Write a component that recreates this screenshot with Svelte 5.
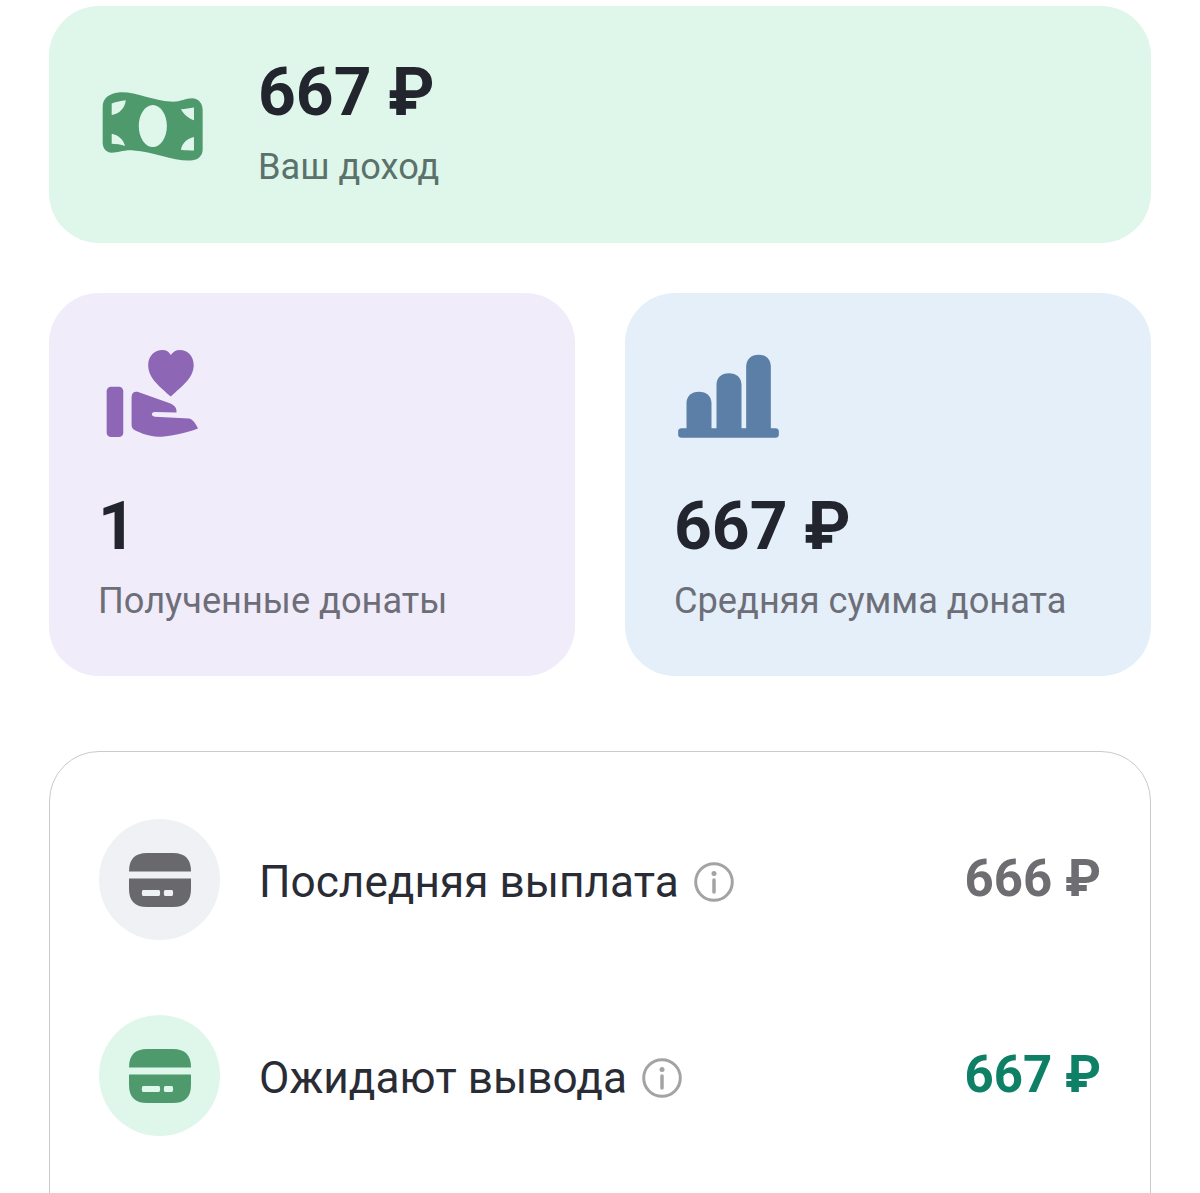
<script>
  const rows = [
    { label: 'Последняя выплата', value: '666 ₽', tone: 'grey' },
    { label: 'Ожидают вывода', value: '667 ₽', tone: 'green' }
  ];
</script>

<main class="page">
  <section class="income">
    <svg class="money" viewBox="36 28 302 214" aria-hidden="true">
      <path fill-rule="evenodd" d="M38 78C38 52 58 38 85 35C130 30 190 60 240 62C270 64 285 52 305 52C325 52 337 68 337 88V205C337 226 320 238 300 238C250 240 190 212 130 208C100 206 85 215 65 215C50 215 38 202 38 185ZM65 68C80 62 92 60 107 58C105 80 90 98 65 102ZM65 158C85 162 100 175 105 195C92 190 78 188 65 188ZM272 85C285 85 298 82 311 80V118C295 112 280 100 272 85ZM311 168V208C298 208 285 208 272 206C275 188 290 172 311 168ZM188 72C165 72 146 100 146 135C146 170 165 198 188 198C211 198 230 170 230 135C230 100 211 72 188 72Z"/>
    </svg>
    <div class="stat">
      <div class="amount">667 ₽</div>
      <div class="caption income-caption">Ваш доход</div>
    </div>
  </section>

  <div class="pair">
    <section class="tile donations">
      <svg class="tile-icon" viewBox="48 28 280 266" aria-hidden="true">
        <path d="M243 170C210 140 175 115 175 75C175 48 195 30 218 30C230 30 238 36 243 45C250 36 258 30 270 30C293 30 312 48 312 75C312 115 275 140 243 170Z"/>
        <rect x="50" y="141" width="50" height="151" rx="13"/>
        <path d="M125 172C125 158 135 153 147 157L240 190C255 196 262 205 260 218L195 217C183 217 183 230 195 231L298 236C310 238 320 255 325 266C290 280 230 291 205 291C180 291 150 280 135 272C128 268 125 262 125 255Z"/>
      </svg>
      <div class="amount">1</div>
      <div class="caption">Полученные донаты</div>
    </section>

    <section class="tile average">
      <svg class="tile-icon" viewBox="38 42 302 252" aria-hidden="true">
        <path d="M38 274C38 268 42 265 48 265H63V190C63 168 78 155 100 155C123 155 138 168 138 190V265H153V135C153 113 168 100 190 100C213 100 228 113 228 135V265H242V80C242 58 257 44 279 44C301 44 316 58 316 80V265H330C336 265 340 268 340 274V284C340 290 336 293 330 293H48C42 293 38 290 38 284Z"/>
      </svg>
      <div class="amount">667 ₽</div>
      <div class="caption">Средняя сумма доната</div>
    </section>
  </div>

  <section class="payouts">
    {#each rows as row}
      <div class="row {row.tone}">
        <div class="badge">
          <svg viewBox="0 0 62 54" aria-hidden="true">
            <path d="M0 18.500C0 6 6 0 18 0H44C56 0 62 6 62 18.500H0Z"/>
            <path fill-rule="evenodd" d="M0 25.500H62V36C62 48 56 54 44 54H18C6 54 0 48 0 36ZM14 37C12.500 37 12.500 43 14 43H30C31.500 43 31.500 37 30 37ZM36 37C34.500 37 34.500 43 36 43H43C44.500 43 44.500 37 43 37Z"/>
          </svg>
        </div>
        <div class="label">{row.label}</div>
        <svg class="info" viewBox="0 0 40 40" aria-hidden="true">
          <circle cx="20" cy="20" r="18.300" fill="none" stroke-width="3"/>
          <circle class="dot" cx="20" cy="11.500" r="2.500"/>
          <path d="M20 18V30" fill="none" stroke-width="3.500" stroke-linecap="round"/>
        </svg>
        <div class="value">{row.value}</div>
      </div>
    {/each}
  </section>
</main>

<style>
  :global(body) {
    margin: 0;
    background: #fff;
    overflow: hidden;
  }

  .page {
    box-sizing: border-box;
    height: 1193px;
    overflow: hidden;
    padding: 6px 49px 0;
    font-family: Roboto, "Liberation Sans", sans-serif;
    color: #22252e;
  }

  .income {
    box-sizing: border-box;
    height: 237px;
    display: flex;
    align-items: center;
    padding-left: 53px;
    gap: 55px;
    background: #dff7ea;
    border-radius: 50px;
  }

  .money {
    width: 101px;
    height: 72px;
    fill: #4f9a6c;
    margin-top: 2px;
  }

  .amount {
    font-size: 66px;
    line-height: 76px;
    font-weight: 700;
  }

  .stat {
    margin-top: -6px;
  }

  .caption {
    font-size: 36.200px;
    line-height: 44px;
    margin-top: 14px;
    color: #6d6e78;
  }

  .income-caption {
    color: #5b716b;
  }

  .pair {
    display: grid;
    grid-template-columns: 1fr 1fr;
    gap: 50px;
    margin-top: 50px;
  }

  .tile {
    box-sizing: border-box;
    height: 383px;
    padding: 0 49px;
    border-radius: 50px;
    overflow: hidden;
  }

  .tile-icon {
    display: block;
    margin-bottom: 51px;
  }

  .donations {
    background: #f0ecfa;
  }

  .donations .tile-icon {
    fill: #8d66b6;
    width: 93px;
    height: 89px;
    margin-top: 56px;
    margin-left: 8px;
  }

  .average {
    background: #e4eff9;
  }

  .average .tile-icon {
    fill: #5b7fa6;
    width: 101px;
    height: 84px;
    margin-top: 61px;
    margin-left: 4px;
  }

  .payouts {
    box-sizing: border-box;
    height: 520px;
    margin-top: 75px;
    padding: 67px 49px 0;
    border: 1px solid #c9cacd;
    border-radius: 50px;
    display: flex;
    flex-direction: column;
    gap: 75px;
  }

  .row {
    display: flex;
    align-items: center;
    height: 121px;
  }

  .badge {
    width: 121px;
    height: 121px;
    border-radius: 50%;
    display: flex;
    align-items: center;
    justify-content: center;
    flex: none;
  }

  .badge svg {
    width: 62px;
    height: 54px;
  }

  .grey .badge {
    background: #eff1f4;
  }

  .grey .badge svg {
    fill: #68686d;
  }

  .green .badge {
    background: #def7ea;
  }

  .green .badge svg {
    fill: #4f9a6c;
  }

  .label {
    margin-left: 39px;
    margin-top: 4px;
    font-size: 44.200px;
    line-height: 52px;
    color: #2a2c35;
  }

  .info {
    width: 40px;
    height: 40px;
    margin-left: 15px;
    margin-top: 4px;
    stroke: #a3a3a5;
  }

  .info .dot {
    fill: #a3a3a5;
    stroke: none;
  }

  .value {
    margin-left: auto;
    margin-top: -2px;
    font-size: 51px;
    line-height: 60px;
    font-weight: 700;
  }

  .grey .value {
    color: #6d6d72;
  }

  .green .value {
    color: #0d8066;
  }
</style>
